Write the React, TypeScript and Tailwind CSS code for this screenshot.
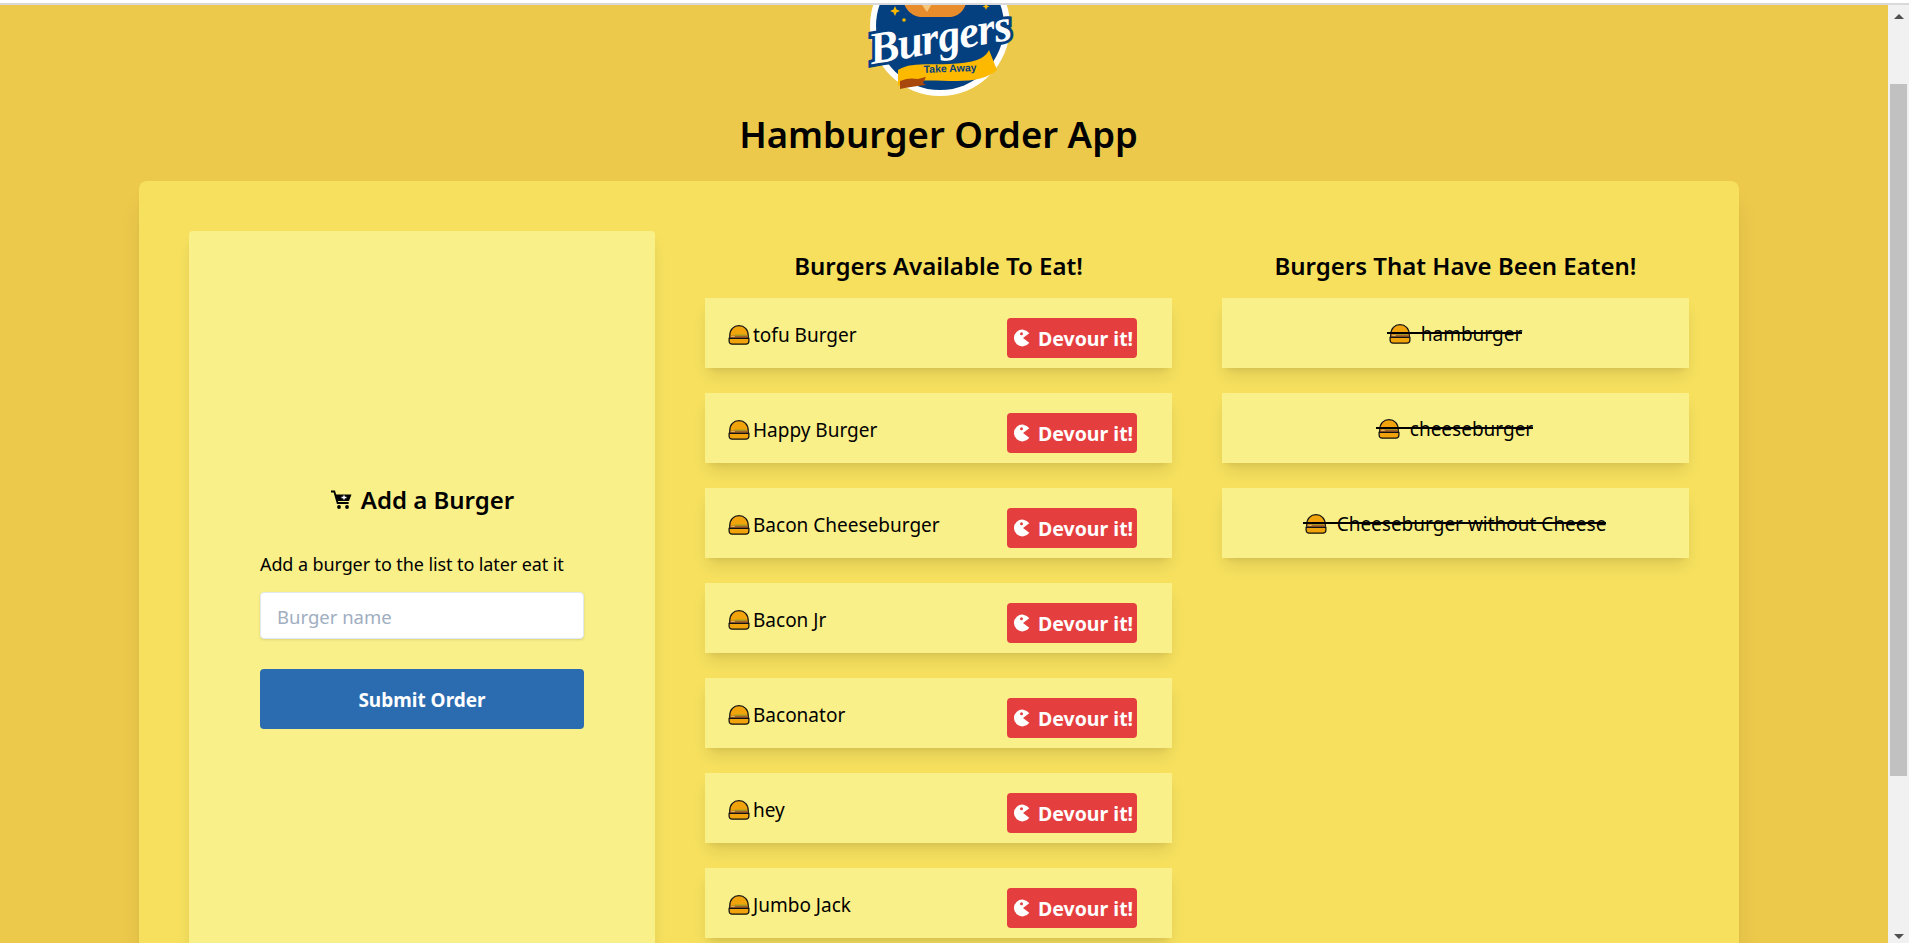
const burgers = ["tofu Burger", "Happy Burger", "Bacon Cheeseburger", "Bacon Jr", "Baconator", "hey", "Jumbo Jack"];
const eaten = ["hamburger", "cheeseburger", "Cheeseburger without Cheese"];

function BurgerIcon() {
  return (
    <svg width="22" height="20" viewBox="1 0.300 20 19" className="shrink-0">
      <path d="M2.200 10.500C2.200 4.500 6 1 11 1s8.800 3.500 8.800 9.500v1.800H2.200z" fill="#f0a30a" stroke="#111" strokeWidth="1.200" />
      <rect x="2.600" y="10.400" width="16.800" height="2.400" fill="#a5622b" />
      <rect x="3.500" y="10.900" width="3.500" height="0.800" fill="#e8c060" />
      <rect x="7" y="9.500" width="11" height="0.800" fill="#7aa02c" />
      <path d="M1.600 13h18.800v2.500c0 1.900-1.100 3-3 3H4.600c-1.900 0-3-1.100-3-3z" fill="#f0a30a" stroke="#111" strokeWidth="1.200" />
    </svg>
  );
}

function Pacman() {
  return (
    <svg width="18" height="18" viewBox="0 0 18 18" className="shrink-0">
      <path d="M16.300 4.300A8.400 8.400 0 1 0 16.300 13.700L10 9z" fill="#fff" />
      <circle cx="8.500" cy="4.800" r="1.500" fill="#e53e3e" />
    </svg>
  );
}

function Cart() {
  return (
    <svg width="23" height="20" viewBox="0 0 23 20" className="shrink-0">
      <path d="M1 1.500h3.300l3.300 11.500h11" fill="none" stroke="#000" strokeWidth="1.800" />
      <path d="M5.500 4.500h16l-2.500 6.500H7.500z" fill="#000" />
      <path d="M11.500 7.500h5M14 5.500v4" stroke="#fff" strokeWidth="1.500" />
      <circle cx="9" cy="17" r="1.900" fill="#000" />
      <circle cx="17" cy="17" r="1.900" fill="#000" />
    </svg>
  );
}

function Logo() {
  return (
    <svg width="160" height="150" viewBox="0 0 160 150" className="shrink-0">
      <circle cx="80" cy="76" r="70" fill="#fff" />
      <circle cx="80" cy="76" r="64" fill="#04407f" />
      <path d="M43 50h64c-2 10-8 16-16 17H60c-8-1-15-7-17-17z" fill="#e88c2c" />
      <path d="M60 52h13l-6 10z" fill="#f5c77e" />
      <path d="M35 56l1.500 3.500 3.500 1.500-3.500 1.500-1.500 3.500-1.500-3.500-3.500-1.500 3.500-1.500z" fill="#fdb900" />
      <circle cx="44" cy="70" r="1.800" fill="#fdb900" />
      <path d="M126 53l1 2.500 2.500 1-2.500 1-1 2.500-1-2.500-2.500-1 2.500-1z" fill="#fdb900" />
      <text x="80" y="102" textAnchor="middle" transform="rotate(-10 80 90)" fontFamily="'Liberation Serif', serif" fontStyle="italic" fontWeight="700" fontSize="45" fill="#fff" stroke="#04407f" strokeWidth="6" paintOrder="stroke" letterSpacing="-1">Burgers</text>
      <path d="M38 120c12-8 30-5 52-6 18-1 34-3 39-14l8 20c-8 8-24 11-40 11-22 0-46-3-59 5z" fill="#fdb900" />
      <path d="M40 131c7-3 12-3 18-2 2-1 5-1 8-2l-3 6 3 2c-9 1-18 2-26 4z" fill="#a8480c" />
      <text x="90" y="122" textAnchor="middle" transform="rotate(-2 90 118)" fontFamily="'Liberation Sans', sans-serif" fontWeight="700" fontSize="10.500" fill="#04407f">Take Away</text>
    </svg>
  );
}

function Row({ name }: { name: string }) {
  return (
    <div className="h-[70px] bg-[#faf089] shadow-lg flex items-start justify-between pl-[23px] pr-[35px]">
      <div className="flex items-center gap-[3px] mt-[25px] h-[24px] text-[19px] leading-[24px] text-black">
        <BurgerIcon />
        <span>{name}</span>
      </div>
      <button className="mt-[20px] h-[40px] w-[130px] rounded bg-[#e53e3e] text-white font-bold text-[19.500px] flex items-center pl-[6px] gap-[7px]">
        <Pacman />
        <span className="pt-[2px]">Devour it!</span>
      </button>
    </div>
  );
}

function EatenRow({ name }: { name: string }) {
  return (
    <div className="h-[70px] bg-[#faf089] shadow-lg flex justify-center pt-[24px]">
      <div className="relative flex items-center gap-[10px] h-[24px] text-[19px] leading-[24px] text-black">
        <BurgerIcon />
        <span>{name}</span>
        <div className="absolute left-[-2px] right-0 top-[10px] h-[2px] bg-black" />
      </div>
    </div>
  );
}

export default function App() {
  return (
    <div className="h-screen overflow-hidden flex flex-col bg-white font-['Noto_Sans','Open_Sans',sans-serif]">
      <div className="h-[2px] mt-[3px] shrink-0 bg-[#d9d9dc]" />
      <div className="flex-1 min-h-0 flex">
        <main className="flex-1 min-w-0 overflow-hidden bg-[#ecc94b]">
          <div className="flex justify-center mt-[-55px] pr-[8px]">
            <Logo />
          </div>
          <h1 className="text-center text-[36.500px] leading-[48px] font-semibold text-black mt-[10px] pr-[11px]">Hamburger Order App</h1>
          <div className="ml-[139px] w-[1600px] mt-[23px] rounded-lg bg-[#f6e05e] shadow-xl p-[50px] grid grid-cols-[466px_467px_467px] gap-[50px]">
            <div className="h-[750px] rounded bg-[#faf089] shadow-lg flex flex-col justify-center px-[71px]">
              <h2 className="flex items-center justify-center gap-[8px] text-[24px] leading-[32px] font-semibold text-black">
                <Cart />
                <span>Add a Burger</span>
              </h2>
              <p className="mt-[36px] text-[18px] leading-[24px] text-black whitespace-nowrap tracking-[-0.1px]">Add a burger to the list to later eat it</p>
              <input placeholder="Burger name" className="mt-[16px] h-[47px] w-full rounded bg-white border border-[#e2e8f0] shadow px-[16px] pt-[2px] text-[18.500px] placeholder:text-[#a0aec0]" />
              <button className="mt-[30px] h-[60px] w-full rounded bg-[#2b6cb0] text-white font-bold text-[19px] pt-[3px]">Submit Order</button>
            </div>
            <div>
              <h3 className="text-center text-[24px] leading-[32px] font-semibold text-black mt-[19px] mb-[16px]">Burgers Available To Eat!</h3>
              <div className="flex flex-col gap-[25px]">
                {burgers.map((b) => <Row key={b} name={b} />)}
              </div>
            </div>
            <div>
              <h3 className="text-center text-[24px] leading-[32px] font-semibold text-black mt-[19px] mb-[16px]">Burgers That Have Been Eaten!</h3>
              <div className="flex flex-col gap-[25px]">
                {eaten.map((b) => <EatenRow key={b} name={b} />)}
              </div>
            </div>
          </div>
        </main>
        <div className="w-[21px] shrink-0 bg-[#f1f1f1] flex flex-col items-center">
          <div className="mt-[9px] w-0 h-0 border-x-[5px] border-x-transparent border-b-[5px] border-b-[#505050]" />
          <div className="mt-[65px] w-[17px] h-[692px] bg-[#c1c1c1]" />
          <div className="mt-[158px] w-0 h-0 border-x-[5px] border-x-transparent border-t-[5px] border-t-[#505050]" />
        </div>
      </div>
    </div>
  );
}
